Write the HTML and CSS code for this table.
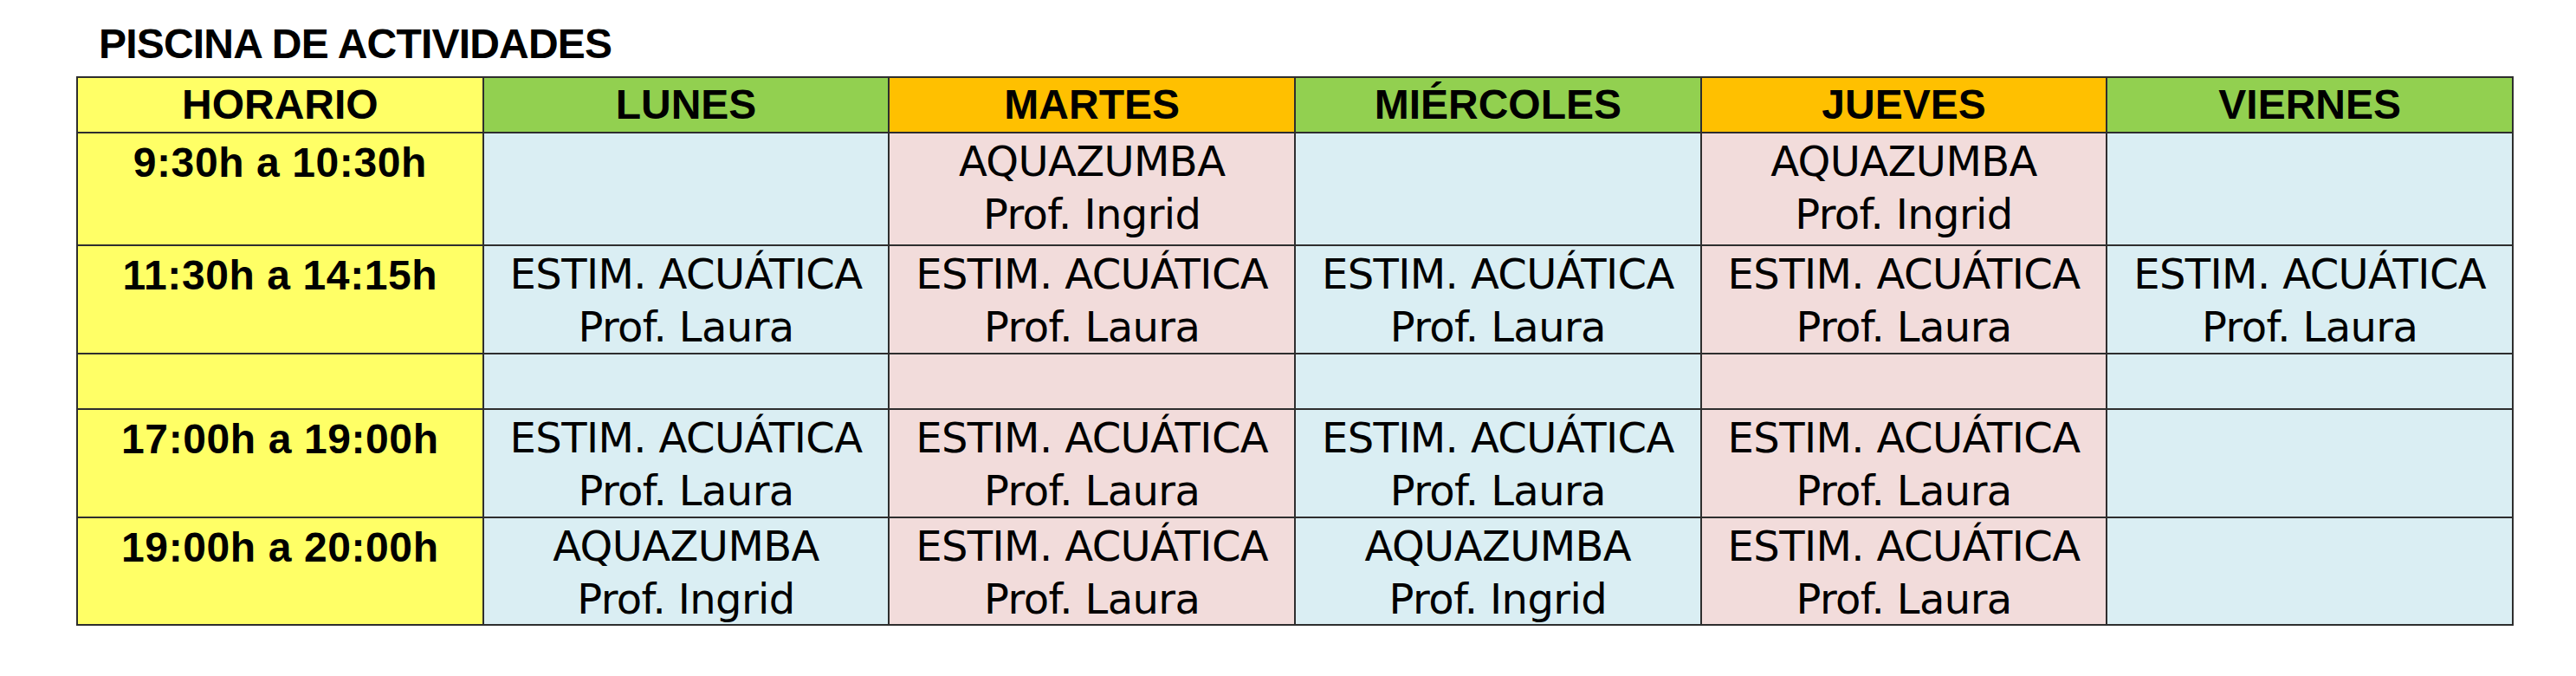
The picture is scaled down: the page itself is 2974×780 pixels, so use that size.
FILE: index.html
```html
<!DOCTYPE html>
<html lang="es">
<head>
<meta charset="utf-8">
<title>Piscina de actividades</title>
<link rel="stylesheet" href="styles.css">
</head>
<body>
<h1 class="title">PISCINA DE ACTIVIDADES</h1>
<div class="schedule">
  <div class="cell head yellow">HORARIO</div>
  <div class="cell head green">LUNES</div>
  <div class="cell head orange">MARTES</div>
  <div class="cell head green">MIÉRCOLES</div>
  <div class="cell head orange">JUEVES</div>
  <div class="cell head green">VIERNES</div>

  <div class="cell time yellow">9:30h a 10:30h</div>
  <div class="cell act blue"></div>
  <div class="cell act pink">AQUAZUMBA<br>Prof. Ingrid</div>
  <div class="cell act blue"></div>
  <div class="cell act pink">AQUAZUMBA<br>Prof. Ingrid</div>
  <div class="cell act blue"></div>

  <div class="cell time yellow">11:30h a 14:15h</div>
  <div class="cell act blue">ESTIM. ACUÁTICA<br>Prof. Laura</div>
  <div class="cell act pink">ESTIM. ACUÁTICA<br>Prof. Laura</div>
  <div class="cell act blue">ESTIM. ACUÁTICA<br>Prof. Laura</div>
  <div class="cell act pink">ESTIM. ACUÁTICA<br>Prof. Laura</div>
  <div class="cell act blue">ESTIM. ACUÁTICA<br>Prof. Laura</div>

  <div class="cell time yellow"></div>
  <div class="cell act blue"></div>
  <div class="cell act pink"></div>
  <div class="cell act blue"></div>
  <div class="cell act pink"></div>
  <div class="cell act blue"></div>

  <div class="cell time yellow">17:00h a 19:00h</div>
  <div class="cell act blue">ESTIM. ACUÁTICA<br>Prof. Laura</div>
  <div class="cell act pink">ESTIM. ACUÁTICA<br>Prof. Laura</div>
  <div class="cell act blue">ESTIM. ACUÁTICA<br>Prof. Laura</div>
  <div class="cell act pink">ESTIM. ACUÁTICA<br>Prof. Laura</div>
  <div class="cell act blue"></div>

  <div class="cell time yellow">19:00h a 20:00h</div>
  <div class="cell act blue">AQUAZUMBA<br>Prof. Ingrid</div>
  <div class="cell act pink">ESTIM. ACUÁTICA<br>Prof. Laura</div>
  <div class="cell act blue">AQUAZUMBA<br>Prof. Ingrid</div>
  <div class="cell act pink">ESTIM. ACUÁTICA<br>Prof. Laura</div>
  <div class="cell act blue"></div>
</div>
</body>
</html>
```
FILE: styles.css
```css
html, body {
  margin: 0;
  padding: 0;
  background: #ffffff;
}

body {
  width: 2974px;
  height: 780px;
  overflow: hidden;
}

.title {
  margin: 27px 0 0 114px;
  height: 48px;
  font-family: "Liberation Sans", Arial, sans-serif;
  font-weight: bold;
  font-size: 48px;
  line-height: 48px;
  letter-spacing: -0.8px;
  color: #000;
}

.schedule {
  margin: 13px 0 0 88px;
  width: 2814px;
  box-sizing: border-box;
  display: grid;
  grid-template-columns: repeat(6, 1fr);
  grid-template-rows: 62px 128px 123px 62px 123px 122px;
  gap: 2px;
  padding: 2px;
  background: #2e2e2e;
}

.cell {
  text-align: center;
  color: #000;
  overflow: hidden;
}

.head {
  display: flex;
  align-items: center;
  justify-content: center;
  font-family: "Liberation Sans", Arial, sans-serif;
  font-weight: bold;
  font-size: 48px;
  line-height: 48px;
}

.time {
  padding-top: 3px;
  font-family: "Liberation Sans", Arial, sans-serif;
  font-weight: bold;
  font-size: 48px;
  line-height: 61px;
  letter-spacing: 0.6px;
}

.act {
  padding-top: 2px;
  font-family: "DejaVu Sans", sans-serif;
  font-size: 48px;
  line-height: 61px;
  letter-spacing: -0.6px;
}

.yellow { background: #ffff66; }
.green { background: #92d050; }
.orange { background: #ffc000; }
.blue { background: #daeef3; }
.pink { background: #f2dcdb; }
```
